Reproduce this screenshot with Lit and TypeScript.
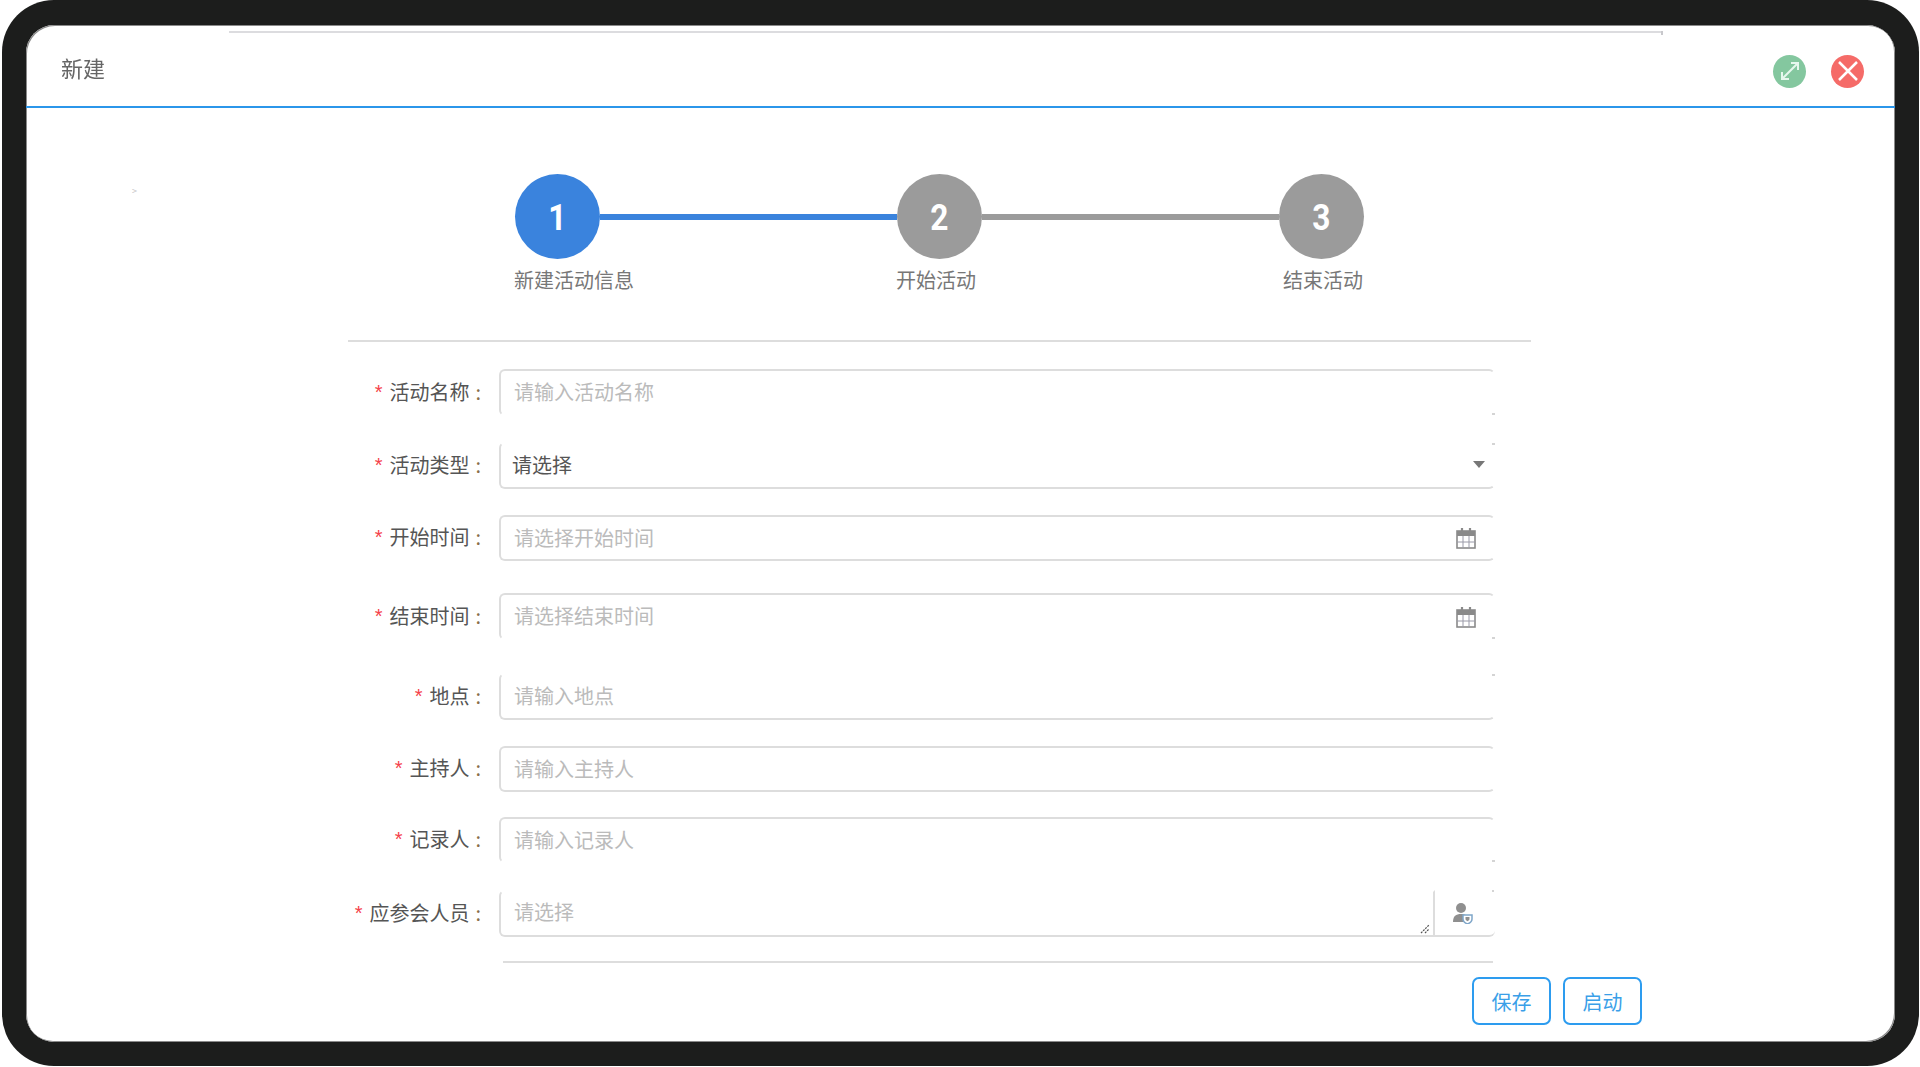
import { LitElement, html, css, svg } from "lit";
import { customElement } from "lit/decorators.js";

type Row = {
  label: string; hint: string; top: number; h: number;
  noTop?: boolean; noBottom?: boolean; kind?: "select" | "date" | "people";
};

const ROWS: Row[] = [
  { label: "活动名称", hint: "请输入活动名称", top: 0, h: 47, noBottom: true },
  { label: "活动类型", hint: "请选择", top: 26, h: 47, noTop: true, kind: "select" },
  { label: "开始时间", hint: "请选择开始时间", top: 26, h: 46, kind: "date" },
  { label: "结束时间", hint: "请选择结束时间", top: 32, h: 47, noBottom: true, kind: "date" },
  { label: "地点", hint: "请输入地点", top: 33, h: 47, noTop: true },
  { label: "主持人", hint: "请输入主持人", top: 26, h: 46 },
  { label: "记录人", hint: "请输入记录人", top: 25, h: 46, noBottom: true },
  { label: "应参会人员", hint: "请选择", top: 27, h: 47, noTop: true, kind: "people" },
];

const STEPS = [
  { n: "1", label: "新建活动信息", on: true, pad: 0 },
  { n: "2", label: "开始活动", on: false, pad: 0 },
  { n: "3", label: "结束活动", on: false, pad: 5 },
];

const calendar = svg`<svg class="cal" width="20" height="22" viewBox="0 0 20 22" fill="none">
  <rect x="1" y="4" width="18" height="17" fill="#fff" stroke="#8a8a8a" stroke-width="1.6"/>
  <rect x="1" y="4" width="18" height="5" fill="#8a8a8a"/>
  <path d="M6 1v5M14 1v5" stroke="#8a8a8a" stroke-width="2.2"/>
  <path d="M7 9v12M13 9v12M1 15h18" stroke="#9a9aa8" stroke-width="1"/>
</svg>`;

const person = svg`<svg width="22" height="22" viewBox="0 0 22 22">
  <circle cx="8" cy="6" r="5" fill="#8f8f8f"/>
  <path d="M0 20c0-6 3-8 8-8s8 2 8 8z" fill="#8f8f8f"/>
  <path d="M10 13h9v4c0 2.500-2 4-4.500 5C12 21 10 19.500 10 17z" fill="#fff" stroke="#7fa6c9" stroke-width="1.500"/>
  <path d="M12.500 15h4v2c0 1-1 1.800-2 2.300-1-.5-2-1.300-2-2.300z" fill="#8f8f8f"/>
</svg>`;

@customElement("app-root")
export class AppRoot extends LitElement {
  static styles = css`
    :host {
      display: block;
      width: 1920px;
      height: 1067px;
      background: #fff;
      font-family: "Noto Sans CJK SC", "Liberation Sans", sans-serif;
      overflow: hidden;
    }
    .frame {
      box-sizing: border-box;
      margin-left: 2px;
      width: 1917px;
      height: 1066px;
      padding: 25px 24px 24px 24px;
      background: #1c1d1c;
      border-radius: 52px;
      display: flex;
    }
    .panel {
      flex: 1;
      background: #fff;
      border-radius: 28px;
      box-shadow: inset 1px 1px 0 #8a8a8a, inset -1px -1px 0 #8a8a8a;
      position: relative;
      overflow: hidden;
      filter: blur(0.35px);
    }
    .header {
      box-sizing: border-box;
      height: 83px;
      border-bottom: 2px solid #2b96ea;
      display: flex;
      align-items: center;
      padding: 0 31px 0 35px;
      position: relative;
    }
    .title {
      font-size: 22px;
      line-height: 30px;
      color: #666;
      margin-top: 3px;
    }
    .actions {
      margin-left: auto;
      display: flex;
      gap: 25px;
      margin-top: 11px;
    }
    .round {
      width: 33px;
      height: 33px;
      border-radius: 50%;
      display: flex;
      align-items: center;
      justify-content: center;
    }
    .green { background: #84c79f; }
    .red { background: #f56b68; }
    .faint {
      position: absolute;
      left: 203px;
      top: 6px;
      width: 1434px;
      height: 2px;
      background: #dcdcdf;
    }
    .faint::after {
      content: "";
      position: absolute;
      right: 0;
      top: 0;
      width: 2px;
      height: 4px;
      background: #c8c8cc;
    }
    .crumb {
      position: absolute;
      left: 106px;
      top: 159px;
      font-size: 9px;
      line-height: 14px;
      color: #c4c4c4;
    }
    .steps {
      margin: 66px 0 0 489px;
      width: 849px;
    }
    .track {
      display: flex;
      align-items: center;
    }
    .dot {
      flex: none;
      width: 85px;
      height: 85px;
      border-radius: 50%;
      background: #9b9b9b;
      color: #fff;
      font: 700 36px/89px Roboto, "Liberation Sans", sans-serif;
      text-align: center;
      overflow: hidden;
    }
    .dot span {
      display: inline-block;
      transform: scaleX(0.88);
    }
    .dot.on { background: #3a83dd; }
    .bar {
      flex: 1;
      height: 6px;
      background: #9b9b9b;
    }
    .bar.on { background: #3a83dd; }
    .names {
      display: grid;
      grid-template-columns: 382px 382px 85px;
      margin: 8px 0 0 -1px;
    }
    .name {
      font-size: 20px;
      line-height: 26px;
      color: #777;
      white-space: nowrap;
    }
    .rule {
      height: 2px;
      background: #ddd;
      width: 1183px;
      margin: 47px 0 0 322px;
    }
    .form {
      margin: 27px 0 0 322px;
      width: 1294px;
    }
    .row {
      display: grid;
      grid-template-columns: 151px 996px;
      align-items: center;
    }
    .label {
      display: flex;
      justify-content: flex-end;
      align-items: center;
      padding-right: 18px;
      font-size: 20px;
      line-height: 26px;
      color: #555;
      margin-top: -2px;
      white-space: nowrap;
    }
    .star {
      color: #f5414a;
      font: 20px/26px "Liberation Sans", sans-serif;
      margin-right: 7px;
    }
    .colon { margin-left: 6px; color: #8a6f4a; }
    .field {
      display: flex;
      height: 100%;
    }
    .box {
      box-sizing: border-box;
      flex: 1;
      min-width: 0;
      display: flex;
      align-items: center;
      justify-content: space-between;
      padding: 0 17px 0 13px;
      border: 2px solid #ddd;
      border-right-color: transparent;
      border-radius: 6px;
      position: relative;
      font-size: 20px;
      color: #bbb;
    }
    .box span { margin-top: -2px; }
    .box.no-top { border-top-color: transparent; }
    .box.no-bottom { border-bottom-color: transparent; }
    .box.no-top::before,
    .box.no-bottom::after {
      content: "";
      position: absolute;
      right: -2px;
      width: 3px;
      height: 2px;
      background: #d4d4d4;
    }
    .box.no-top::before { top: -1px; }
    .box.no-bottom::after { bottom: -1px; }
    .box.select { color: #555; padding-left: 11px; }
    .box.select .arrow {
      width: 0;
      height: 0;
      border: 6px solid transparent;
      border-top: 7px solid #777;
      border-bottom: 0;
      margin-right: -9px;
      margin-top: -3px;
    }
    .box.people {
      flex: none;
      width: 936px;
      border-right-color: #ddd;
      border-top-right-radius: 0;
      border-bottom-right-radius: 0;
    }
    .box.people span { margin-top: -5px; }
    .box.people::before { display: none; }
    .grip {
      position: absolute;
      right: 3px;
      bottom: 1px;
    }
    .addon {
      box-sizing: border-box;
      flex: 1;
      display: flex;
      align-items: center;
      justify-content: center;
      padding-right: 3px;
      border-bottom: 2px solid #ddd;
      border-bottom-right-radius: 6px;
      position: relative;
    }
    .addon::before {
      content: "";
      position: absolute;
      right: 1px;
      top: 0;
      width: 2px;
      height: 2px;
      background: #d4d4d4;
    }
    .end-rule {
      height: 2px;
      background: #ddd;
      margin: 24px 0 0 155px;
      width: 990px;
    }
    .buttons {
      display: flex;
      justify-content: flex-end;
      gap: 12px;
      margin-top: 14px;
    }
    .btn {
      box-sizing: border-box;
      width: 79px;
      height: 48px;
      border: 2px solid #2d9cef;
      border-radius: 7px;
      background: #fff;
      color: #3a9fe8;
      font: inherit;
      font-size: 20px;
      padding: 0;
    }
  `;

  private renderField(r: Row) {
    const cls = `box ${r.kind ?? ""} ${r.noTop ? "no-top" : ""} ${r.noBottom ? "no-bottom" : ""}`;
    const box = html`<div class=${cls}>
      <span>${r.hint}</span>
      ${r.kind === "select" ? html`<i class="arrow"></i>` : ""}
      ${r.kind === "date" ? calendar : ""}
      ${r.kind === "people"
        ? svg`<svg class="grip" width="10" height="10" viewBox="0 0 10 10"><path d="M1 9l8-8M5 9l4-4" stroke="#555" stroke-width="1.200" stroke-dasharray="2 1"/></svg>`
        : ""}
    </div>`;
    return r.kind === "people" ? html`${box}<div class="addon">${person}</div>` : box;
  }

  render() {
    return html`<div class="frame" lang="zh-CN">
      <div class="panel">
        <div class="header">
          <i class="faint"></i>
          <div class="title">新建</div>
          <div class="actions">
            <div class="round green">
              <svg width="22" height="22" viewBox="0 0 22 22" fill="none" stroke="#e6f7ee" stroke-width="2">
                <path d="M3 19L19 3M12 3h7v7M3 12v7h7"/>
              </svg>
            </div>
            <div class="round red">
              <svg width="22" height="22" viewBox="0 0 22 22" fill="none" stroke="#fff" stroke-width="2.500">
                <path d="M2 2l18 18M20 2L2 20"/>
              </svg>
            </div>
          </div>
        </div>
        <span class="crumb">&gt;</span>
        <div class="steps">
          <div class="track">
            ${STEPS.map((s, i) => html`
              <div class="dot ${s.on ? "on" : ""}"><span>${s.n}</span></div>
              ${i < STEPS.length - 1 ? html`<div class="bar ${s.on ? "on" : ""}"></div>` : ""}
            `)}
          </div>
          <div class="names">
            ${STEPS.map((s) => html`<div class="name" style="padding-left:${s.pad}px">${s.label}</div>`)}
          </div>
        </div>
        <div class="rule"></div>
        <div class="form">
          ${ROWS.map((r) => html`
            <div class="row" style="margin-top:${r.top}px;height:${r.h}px">
              <div class="label"><span class="star">*</span>${r.label}<span class="colon">:</span></div>
              <div class="field">${this.renderField(r)}</div>
            </div>
          `)}
          <div class="end-rule"></div>
          <div class="buttons">
            <button class="btn">保存</button>
            <button class="btn">启动</button>
          </div>
        </div>
      </div>
    </div>`;
  }
}
